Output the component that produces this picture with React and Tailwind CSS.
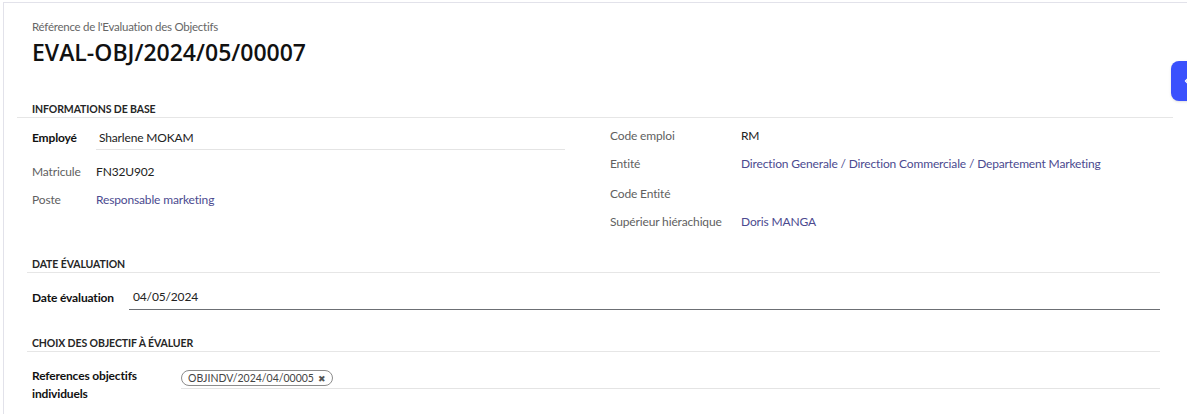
import React from 'react';

const font = { fontFamily: 'Lato, "Open Sans", sans-serif' };
const titleFont = { fontFamily: '"Open Sans", "Noto Sans", sans-serif' };

const SectionTitle = ({ children, className = '' }) => (
  <div className={`border-b border-[#e6e6e6] pb-[1px] ${className}`}>
    <div className="h-[14px] text-[10.5px] leading-[14px] font-bold uppercase tracking-[-0.1px] text-[#262626]">
      {children}
    </div>
  </div>
);

const InfoRow = ({ label, value, link, className = '' }) => (
  <div className={`flex items-center ${className}`}>
    <div className="w-[131px] shrink-0 text-[#5f5f5f]">{label}</div>
    <div className={link ? 'text-[#4b4a8f]' : 'text-[#222]'}>{value}</div>
  </div>
);

const App = () => {
  return (
    <div
      className="relative h-[414px] w-[1187px] overflow-hidden bg-white pt-[2px] pl-[3px] text-[12px] tracking-[-0.15px]"
      style={font}
    >
      <div className="h-full border-t border-l border-[#e2e2ea]">
        {/* Header */}
        <div className="pl-[28px] pt-[16px]">
          <div className="h-[16px] text-[11.5px] leading-[16px] tracking-[-0.25px] text-[#666]">
            Référence de l'Evaluation des Objectifs
          </div>
          <div
            className="mt-[2px] h-[30px] text-[23px] leading-[30px] font-semibold tracking-normal text-[#111]"
            style={titleFont}
          >
            EVAL-OBJ/2024/05/00007
          </div>
        </div>

        {/* Informations de base */}
        <div className="ml-[13px] mr-[14px] mt-[35px]">
          <SectionTitle className="pl-[15px]">Informations de base</SectionTitle>
          <div className="flex h-[139px] pl-[15px]">
            <div className="w-[578px] shrink-0 pt-[8px]">
              <div className="flex h-[24px] items-center">
                <div className="w-[64px] shrink-0 font-bold text-[#111]">Employé</div>
                <div className="flex h-full w-[469px] items-center border-b border-[#e4e4e4] pl-[3px] text-[#222]">
                  Sharlene MOKAM
                </div>
              </div>
              <div className="mt-[8px] flex h-[28px] items-center">
                <div className="w-[64px] shrink-0 text-[#5f5f5f]">Matricule</div>
                <div className="text-[#222]">FN32U902</div>
              </div>
              <div className="flex h-[28px] items-center">
                <div className="w-[64px] shrink-0 text-[#5f5f5f]">Poste</div>
                <div className="text-[#4b4a8f]">Responsable marketing</div>
              </div>
            </div>
            <div className="flex-1 pt-[4px]">
              <InfoRow className="h-[28px]" label="Code emploi" value="RM" />
              <InfoRow
                className="h-[27px]"
                label="Entité"
                value="Direction Generale / Direction Commerciale / Departement Marketing"
                link
              />
              <InfoRow className="h-[33px]" label="Code Entité" value="" />
              <InfoRow className="h-[24px]" label="Supérieur hiérachique" value="Doris MANGA" link />
            </div>
          </div>
        </div>

        {/* Date évaluation */}
        <div className="ml-[23px] mr-[27px]">
          <SectionTitle className="pl-[5px]">Date évaluation</SectionTitle>
          <div className="mt-[12px] flex h-[25px] items-center pl-[5px]">
            <div className="w-[97px] shrink-0 font-bold text-[#111]">Date évaluation</div>
            <div className="flex h-full flex-1 items-center border-b border-[#6c6f74] pl-[4px] text-[#222]">
              04/05/2024
            </div>
          </div>
        </div>

        {/* Choix des objectifs */}
        <div className="ml-[23px] mr-[27px] mt-[26px]">
          <SectionTitle className="pl-[5px]">Choix des objectif à évaluer</SectionTitle>
          <div className="mt-[15px] flex pl-[5px]">
            <div className="w-[149px] shrink-0 leading-[18px] font-bold text-[#111]">
              References objectifs
              <br />
              individuels
            </div>
            <div className="h-[22px] flex-1 border-b border-[#e4e4e4] pt-[2px]">
              <span className="inline-flex h-[16px] items-center gap-[4px] rounded-full border border-[#8c8c8c] px-[6px] text-[10.5px] leading-none tracking-normal text-[#444]">
                OBJINDV/2024/04/00005
                <span className="text-[9px] text-[#555]">✖</span>
              </span>
            </div>
          </div>
        </div>
      </div>

      {/* Side panel toggle */}
      <div className="absolute left-[1171px] top-[61px] flex h-[40px] w-[30px] items-center rounded-lg bg-[#3a51fd] pl-[13px] shadow-sm">
        <svg width="6" height="8" viewBox="0 0 6 8" fill="none">
          <path d="M4.5 1 L1.5 4 L4.5 7" stroke="white" strokeWidth="1.4" strokeLinecap="round" strokeLinejoin="round" />
        </svg>
      </div>
    </div>
  );
};

export default App;
